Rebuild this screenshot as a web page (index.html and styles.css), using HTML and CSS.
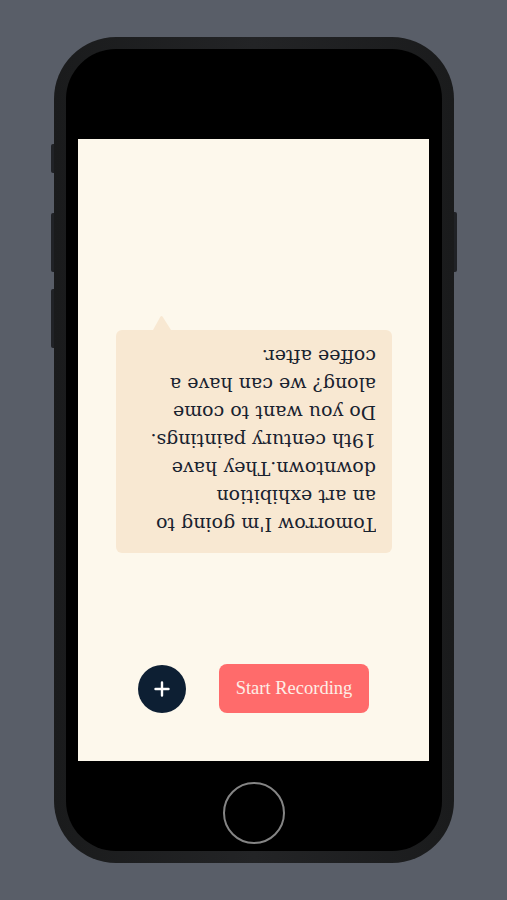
FILE: index.html
```html
<!DOCTYPE html>
<html lang="en">
<head>
<meta charset="utf-8">
<title>Phone</title>
<link rel="stylesheet" href="styles.css">
</head>
<body>
<div class="stage">
  <div class="side-left">
    <span class="btn-mute"></span>
    <span class="btn-vol"></span>
    <span class="btn-vol"></span>
  </div>
  <div class="phone">
    <div class="bezel">
      <div class="bezel-top"></div>
      <div class="screen">
        <div class="bubble-wrap">
          <svg class="tail" width="18" height="15" viewBox="0 0 18 15"><path d="M0 15 L7.2 2 Q8.5 0 9.8 2 L18 15 Z" fill="#f8e8d2"/></svg>
          <div class="bubble">
            <p class="bubble-text">Tomorrow I'm going to an art exhibition downtown.They have 19th century paintings. Do you want to come along? we can have a coffee after.</p>
          </div>
        </div>
        <div class="actions">
          <button class="add" aria-label="Add">
            <svg width="16" height="16" viewBox="0 0 16 16"><path d="M8 1.5 V14.5 M1.5 8 H14.5" stroke="#ffffff" stroke-width="2.4" stroke-linecap="round"/></svg>
          </button>
          <button class="record">Start Recording</button>
        </div>
      </div>
      <div class="bezel-bottom">
        <span class="home"></span>
      </div>
    </div>
  </div>
  <div class="side-right">
    <span class="btn-power"></span>
  </div>
</div>
</body>
</html>
```

FILE: styles.css
```css
html, body {
  margin: 0;
  padding: 0;
}
body {
  background: #595e68;
  width: 507px;
  height: 900px;
  overflow: hidden;
}
.stage {
  height: 900px;
  display: flex;
  justify-content: center;
  align-items: flex-start;
}
.side-left {
  width: 3px;
  margin-top: 144px;
  display: flex;
  flex-direction: column;
  gap: 17px;
}
.side-left span {
  display: block;
  width: 3px;
  background: #202226;
  border-radius: 2px 0 0 2px;
}
.btn-mute { height: 29px; margin-bottom: 23px; }
.btn-vol { height: 59px; }
.side-right {
  width: 3px;
  margin-top: 212px;
}
.btn-power {
  display: block;
  width: 3px;
  height: 60px;
  background: #202226;
  border-radius: 0 2px 2px 0;
}
.phone {
  margin-top: 37px;
  width: 400px;
  height: 826px;
  box-sizing: border-box;
  padding: 12px;
  border-radius: 62px;
  background: linear-gradient(90deg, #1a1b1c 0%, #232426 50%, #1a1b1c 100%);
}
.bezel {
  height: 100%;
  background: #000;
  border-radius: 50px;
  display: flex;
  flex-direction: column;
  align-items: center;
}
.bezel-top {
  height: 90px;
  flex: none;
}
.screen {
  width: 351px;
  height: 622px;
  flex: none;
  background: #fdf8ec;
  display: flex;
  flex-direction: column;
  align-items: center;
  box-sizing: border-box;
  padding-top: 176px;
  padding-bottom: 48px;
}
.bubble-wrap {
  width: 276px;
  display: flex;
  flex-direction: column;
}
.tail {
  display: block;
  margin-left: 37px;
}
.bubble {
  background: #f8e8d2;
  border-radius: 6px;
  padding: 13px 16px 14px;
}
.bubble-text {
  margin: 0;
  font-family: "DejaVu Serif", serif;
  font-size: 19px;
  line-height: 28px;
  color: #19222f;
  transform: rotate(180deg);
}
.actions {
  margin-top: auto;
  display: flex;
  align-items: center;
  gap: 33px;
}
.add {
  width: 48px;
  height: 48px;
  border-radius: 50%;
  border: none;
  background: #0d1f33;
  padding: 0;
  display: flex;
  align-items: center;
  justify-content: center;
}
.record {
  width: 150px;
  height: 49px;
  border: none;
  border-radius: 8px;
  background: #ff6b6b;
  color: #fdeee6;
  font-family: "Liberation Serif", serif;
  font-size: 18.5px;
  padding: 0;
}
.bezel-bottom {
  flex: 1;
  display: flex;
  justify-content: center;
  padding-top: 21px;
}
.home {
  width: 58px;
  height: 58px;
  border: 2px solid #858585;
  border-radius: 50%;
}
```
